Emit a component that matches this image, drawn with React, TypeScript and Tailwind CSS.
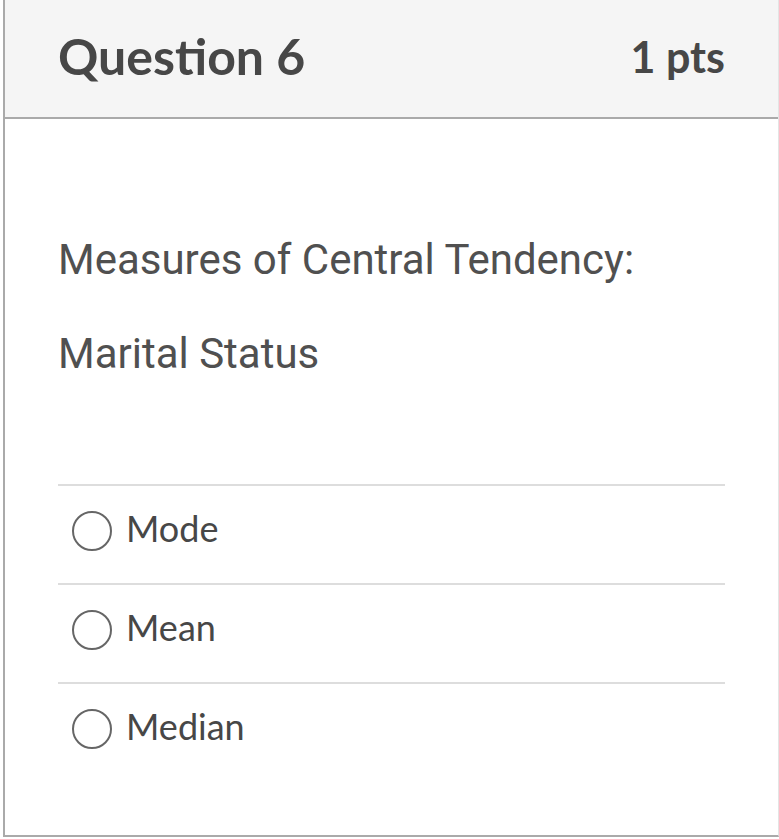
import React from 'react';

const options = ['Mode', 'Mean', 'Median'];

export default function App() {
  return (
    <div className="min-h-screen bg-white pl-[3px]">
      <div className="w-[776px] h-[837px] border-l-2 border-b-2 border-r border-l-[#aaaaaa] border-b-[#aaaaaa] border-r-[#e4e4e4] bg-white">
        {/* Header */}
        <div className="h-[119px] flex items-center justify-between bg-[#f5f5f5] border-b-2 border-[#aaaaaa] pl-[53px] pr-[53px]">
          <h2 className="text-[50px] font-bold text-[#474747] leading-none font-['Lato',sans-serif] -mt-[5px]">Question 6</h2>
          <span className="text-[43px] font-bold text-[#474747] leading-none font-['Lato',sans-serif] -mt-[5px]">1 pts</span>
        </div>

        {/* Body */}
        <div className="pl-[53px] pr-[53px] pt-[111px]">
          <div className="text-[42px] leading-[60px] text-[#505050] font-['Roboto',sans-serif]">
            <p>Measures of Central Tendency:</p>
            <p className="mt-[34px]">Marital Status</p>
          </div>

          <div className="mt-[100px]">
            {options.map((opt) => (
              <label key={opt} className="h-[99px] flex items-center border-t-2 border-[#dddddd] pl-[14px] pb-[8px]">
                <span className="w-10 h-10 rounded-full border-2 border-[#666666] shrink-0" />
                <span className="ml-[14px] text-[36px] text-[#474747] font-['Lato',sans-serif] -mt-[6px]">{opt}</span>
              </label>
            ))}
          </div>
        </div>
      </div>
    </div>
  );
}
